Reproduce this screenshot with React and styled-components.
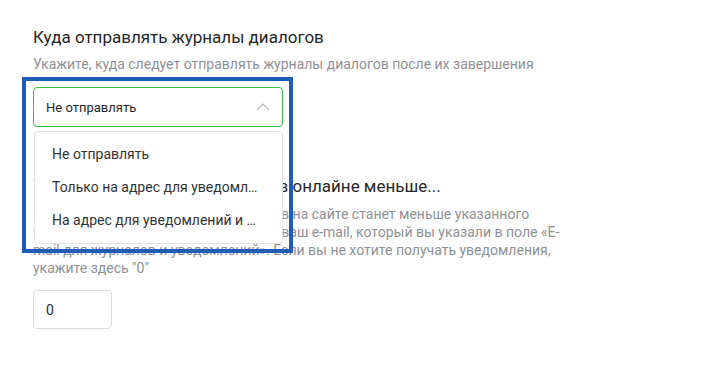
import React from 'react';
import styled, { createGlobalStyle } from 'styled-components';

const options = [
  'Не отправлять',
  'Только на адрес для уведомлений',
  'На адрес для уведомлений и на адрес оператора',
];

const App = () => {
  return (
    <>
      <GlobalStyle />
      <Page>
        <Section>
          <Title>Куда отправлять журналы диалогов</Title>
          <Hint>Укажите, куда следует отправлять журналы диалогов после их завершения</Hint>
          <SelectWrap>
            <SelectBox>
              <span>Не отправлять</span>
              <Chevron width="14" height="8" viewBox="0 0 14 8">
                <path d="M1 7.2 L7 1.2 L13 7.2" fill="none" stroke="#b3b3b3" strokeWidth="1.2" />
              </Chevron>
            </SelectBox>
            <Menu>
              {options.map((o) => (
                <MenuItem key={o}>{o}</MenuItem>
              ))}
            </Menu>
            <Highlight />
          </SelectWrap>
        </Section>

        <Section $gap={47}>
          <Title>Уведомлять, если операторов в онлайне меньше...</Title>
          <Description>
            Когда количество онлайн–операторов на сайте станет меньше указанного
            <br />
            числа, мы отправим уведомление на ваш e-mail, который вы указали в поле «E-
            <br />
            mail для журналов и уведомлений». Если вы не хотите получать уведомления,
            <br />
            укажите здесь "0"
          </Description>
          <NumberInput defaultValue="0" />
        </Section>
      </Page>
    </>
  );
};

export default App;

const GlobalStyle = createGlobalStyle`
  html, body {
    margin: 0;
    padding: 0;
    background: #ffffff;
  }
  body {
    font-family: Roboto, "Liberation Sans", Arial, sans-serif;
    -webkit-font-smoothing: antialiased;
  }
`;

const Page = styled.div`
  padding: 25px 0 0 33px;
  display: flex;
  flex-direction: column;
`;

const Section = styled.div`
  display: flex;
  flex-direction: column;
  align-items: flex-start;
  margin-top: ${(p) => p.$gap || 0}px;
`;

const Title = styled.div`
  font-size: 17px;
  line-height: 24px;
  color: #262626;
  white-space: nowrap;
`;

const Hint = styled.div`
  margin-top: 6px;
  font-size: 14px;
  line-height: 18px;
  color: #8e9196;
  white-space: nowrap;
`;

const Description = styled(Hint)`
  margin-top: 7px;
`;

const SelectWrap = styled.div`
  position: relative;
  margin-top: 14px;
  width: 250px;
`;

const SelectBox = styled.div`
  box-sizing: border-box;
  height: 40px;
  width: 250px;
  border: 1px solid #3dbb4b;
  border-radius: 4px;
  padding: 0 12px 0 12px;
  display: flex;
  align-items: center;
  justify-content: space-between;
  font-size: 13px;
  color: #262626;
`;

const Chevron = styled.svg`
  display: block;
`;

const Menu = styled.div`
  position: absolute;
  top: 44px;
  left: 1px;
  box-sizing: border-box;
  width: 249px;
  padding: 6px 0;
  background: #ffffff;
  border: 1px solid #e4e4e4;
  border-radius: 4px;
  z-index: 2;
`;

const MenuItem = styled.div`
  height: 33px;
  line-height: 33px;
  padding: 0 18px 0 17px;
  font-size: 14px;
  color: #333333;
  white-space: nowrap;
  overflow: hidden;
  text-overflow: ellipsis;
`;

const Highlight = styled.div`
  position: absolute;
  left: -11px;
  top: -10px;
  width: 271px;
  height: 176px;
  box-sizing: border-box;
  border: 4px solid #1f5cb9;
  z-index: 3;
  pointer-events: none;
`;

const NumberInput = styled.input`
  margin-top: 13px;
  box-sizing: border-box;
  width: 79px;
  height: 39px;
  border: 1px solid #dcdcdc;
  border-radius: 4px;
  padding: 0 12px;
  font-family: inherit;
  font-size: 14px;
  color: #262626;
  outline: none;
`;
